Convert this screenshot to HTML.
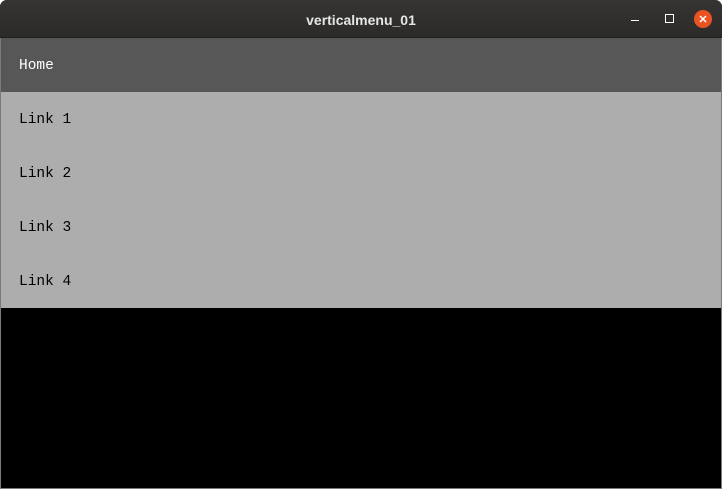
<!DOCTYPE html>
<html><head><style>
html,body{margin:0;padding:0;width:722px;height:489px;overflow:hidden;background:#fff;}
.win{position:absolute;left:0;top:0;width:722px;height:489px;background:#000;border-radius:7px 7px 0 0;overflow:hidden;}
.title{position:absolute;left:0;top:0;width:722px;height:37px;background:linear-gradient(#353432,#2c2b29);border-bottom:1px solid #1e1e1e;}
.title .t{position:absolute;left:0;right:0;top:0;font:bold 14px "Liberation Sans","DejaVu Sans",sans-serif;line-height:40px;text-align:center;color:#e6e6e6;}
.menu{position:absolute;left:1px;right:1px;top:38px;}
.row{font:14.5px "Liberation Mono","DejaVu Sans Mono",monospace;height:54px;line-height:56px;padding-left:18px;color:#000;background:#adadad;}
.row.home{background:#575757;color:#fff;}
.edge{position:absolute;top:38px;bottom:0;width:1px;background:#7a7a7a;}
.bot{position:absolute;left:0;right:0;bottom:0;height:1px;background:#7a7a7a;}
</style></head><body>
<div class="win">
<div class="title"><div class="t">verticalmenu_01</div>
<div style="position:absolute;left:631px;top:20px;width:8px;height:1px;background:#fff"></div>
<div style="position:absolute;left:665px;top:14px;width:7px;height:7px;border:1px solid #fff"></div>
<div style="position:absolute;left:694px;top:10px;width:18px;height:18px;border-radius:50%;background:#e95420"></div>
<svg style="position:absolute;left:694px;top:10px" width="18" height="18"><path d="M6 6L12 12M12 6L6 12" stroke="#fff" stroke-width="1.5"/></svg>
</div>
<div class="menu">
<div class="row home">Home</div>
<div class="row">Link 1</div>
<div class="row">Link 2</div>
<div class="row">Link 3</div>
<div class="row">Link 4</div>
</div>
<div class="edge" style="left:0"></div><div class="edge" style="right:0"></div><div class="bot"></div>
</div>
</body></html>
